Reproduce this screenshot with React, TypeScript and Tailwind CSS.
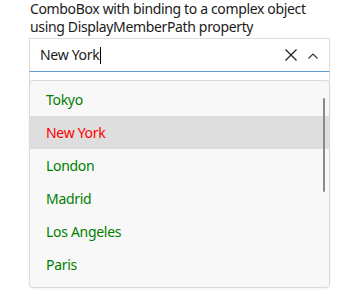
const cities = ["Tokyo", "New York", "London", "Madrid", "Los Angeles", "Paris"];

export default function App() {
  const selected = "New York";
  return (
    <div className="relative h-[294px] w-[345px] overflow-hidden bg-white font-['Noto_Sans',sans-serif] text-[#1b1b1b]">
      <div className="pl-[30px] text-[14px] leading-[18px] tracking-[-0.35px]">
        <div>ComboBox with binding to a complex object</div>
        <div>using DisplayMemberPath property</div>
      </div>

      <div className="relative ml-[29px] mt-[2px] w-[301px]">
        <div className="flex h-[34px] items-center border border-[#dcdcdc] border-b-[#5b9bd5] bg-white pl-[10px] pr-[11px]">
          <span className="text-[14px] leading-none tracking-[-0.3px]">{selected}</span>
          <span className="ml-[1px] h-[17px] w-[1px] bg-black" />
          <div className="flex-1" />
          <svg width="12" height="12" viewBox="0 0 12 12" className="mb-[1px]">
            <path d="M0.5 0.5 L11.5 11.5 M11.5 0.5 L0.5 11.5" stroke="#1f1f1f" strokeWidth="1.2" fill="none" />
          </svg>
          <svg width="10" height="6" viewBox="0 0 10 6" className="ml-[11px] mt-[2px]">
            <path d="M0.5 5.5 L5 1 L9.5 5.5" stroke="#333" strokeWidth="1.1" fill="none" />
          </svg>
        </div>
        <div className="h-[30px] border-x border-[#dcdcdc]" />

        <div className="absolute left-0 top-[42px] w-[301px] rounded-[4px] border border-[#dadada] bg-[#f8f8f8] pb-[6px] pt-[2px] shadow-[0_1px_3px_rgba(0,0,0,0.06)]">
          {cities.map((c) => {
            const sel = c === selected;
            return (
              <div
                key={c}
                className={`flex h-[33px] items-center pl-[16px] text-[14px] tracking-[-0.3px] ${
                  sel ? "bg-[#dedede] text-[#ff0000]" : "text-[#008000]"
                }`}
              >
                {c}
              </div>
            );
          })}
          <div className="absolute right-[4px] top-[17px] h-[94px] w-[2px] rounded-full bg-[#8a8a8a]" />
        </div>
      </div>
    </div>
  );
}
